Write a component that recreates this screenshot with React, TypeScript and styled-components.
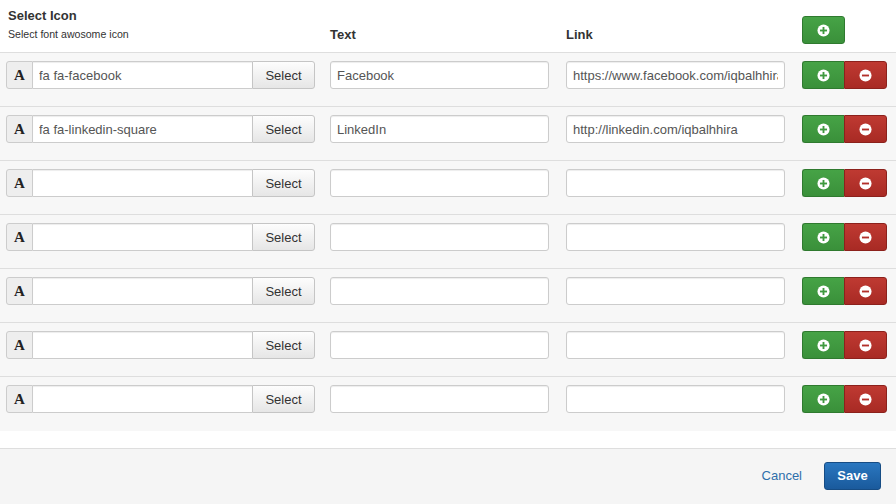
import * as React from 'react'
import styled, { createGlobalStyle } from 'styled-components'

const GlobalStyle = createGlobalStyle`
  html, body {
    margin: 0;
    padding: 0;
    background: #fff;
    font-family: "Liberation Sans", Arial, sans-serif;
    color: #333;
  }
  * { box-sizing: border-box; }
`

type Row = { icon: string; text: string; link: string }

const rows: Row[] = [
  { icon: 'fa fa-facebook', text: 'Facebook', link: 'https://www.facebook.com/iqbalhhira' },
  { icon: 'fa fa-linkedin-square', text: 'LinkedIn', link: 'http://linkedin.com/iqbalhhira' },
  { icon: '', text: '', link: '' },
  { icon: '', text: '', link: '' },
  { icon: '', text: '', link: '' },
  { icon: '', text: '', link: '' },
  { icon: '', text: '', link: '' },
]

const CircleIcon = ({ minus, color }: { minus?: boolean; color: string }) => (
  <svg width="13" height="13" viewBox="0 0 14 14">
    <circle cx="7" cy="7" r="6.5" fill="#fff" />
    <rect x="3.2" y="6" width="7.6" height="2" fill={color} />
    {!minus && <rect x="6" y="3.2" width="2" height="7.6" fill={color} />}
  </svg>
)

export default function App() {
  return (
    <Page>
      <GlobalStyle />
      <Header>
        <HeadCell>
          <Title>Select Icon</Title>
          <Hint>Select font awosome icon</Hint>
        </HeadCell>
        <ColLabel>Text</ColLabel>
        <ColLabel>Link</ColLabel>
        <HeadActions>
          <GreenButton $single>
            <CircleIcon color="#3f9a3f" />
          </GreenButton>
        </HeadActions>
      </Header>
      <Body>
        {rows.map((r, i) => (
          <RowLine key={i} $last={i === rows.length - 1}>
            <InputGroup>
              <Addon>A</Addon>
              <GroupInput defaultValue={r.icon} />
              <SelectButton>Select</SelectButton>
            </InputGroup>
            <Field defaultValue={r.text} />
            <Field defaultValue={r.link} />
            <ButtonGroup>
              <GreenButton>
                <CircleIcon color="#3f9a3f" />
              </GreenButton>
              <RedButton>
                <CircleIcon minus color="#b3302a" />
              </RedButton>
            </ButtonGroup>
          </RowLine>
        ))}
      </Body>
      <Spacer />
      <Footer>
        <CancelLink href="#">Cancel</CancelLink>
        <SaveButton>Save</SaveButton>
      </Footer>
    </Page>
  )
}

const Page = styled.div`
  width: 896px;
  height: 504px;
  display: flex;
  flex-direction: column;
  overflow: hidden;
`

const columns = `309px 219px 219px 85px`

const Header = styled.div`
  display: grid;
  grid-template-columns: ${columns};
  column-gap: 15px;
  padding: 8px 0 0 6px;
  height: 53px;
  border-bottom: 1px solid #dedede;
  & > :nth-child(3) {
    margin-left: 2px;
  }
  & > :nth-child(4) {
    margin-left: 4px;
  }
`

const HeadCell = styled.div`
  padding-left: 2px;
`

const Title = styled.div`
  font-size: 13px;
  font-weight: bold;
  color: #333;
  line-height: 16px;
`

const Hint = styled.div`
  font-size: 10.6px;
  color: #333;
  margin-top: 4px;
`

const ColLabel = styled.div`
  font-size: 13px;
  font-weight: bold;
  color: #333;
  padding-top: 19px;
`

const HeadActions = styled.div`
  padding-top: 8px;
`

const Body = styled.div`
  background: #f7f7f7;
`

const RowLine = styled.div<{ $last?: boolean }>`
  display: grid;
  grid-template-columns: ${columns};
  column-gap: 15px;
  align-items: start;
  height: 54px;
  padding: 8px 0 0 6px;
  border-bottom: ${(p) => (p.$last ? 'none' : '1px solid #dedede')};
  & > :nth-child(3) {
    margin-left: 2px;
  }
  & > :nth-child(4) {
    margin-left: 4px;
  }
`

const InputGroup = styled.div`
  display: flex;
  height: 28px;
`

const Addon = styled.span`
  width: 27px;
  display: flex;
  align-items: center;
  justify-content: center;
  background: #eee;
  border: 1px solid #ccc;
  border-radius: 3px 0 0 3px;
  font-family: "Liberation Serif", "Times New Roman", serif;
  font-weight: bold;
  font-size: 15px;
  color: #222;
`

const inputStyle = `
  height: 28px;
  border: 1px solid #ccc;
  background: #fff;
  box-shadow: inset 0 1px 1px rgba(0, 0, 0, 0.075);
  font-family: "Liberation Sans", Arial, sans-serif;
  font-size: 13px;
  color: #555;
  padding: 0 6px;
  outline: none;
`

const GroupInput = styled.input`
  ${inputStyle}
  flex: 1;
  min-width: 0;
  border-left: none;
  border-right: none;
  border-radius: 0;
`

const SelectButton = styled.button`
  width: 63px;
  border: 1px solid #c5c5c5;
  border-radius: 0 3px 3px 0;
  background: linear-gradient(#fdfdfd, #e6e6e6);
  font-family: "Liberation Sans", Arial, sans-serif;
  font-size: 13px;
  color: #333;
  padding: 0;
`

const Field = styled.input`
  ${inputStyle}
  width: 219px;
  border-radius: 3px;
`

const ButtonGroup = styled.div`
  display: flex;
  height: 28px;
`

const BaseButton = styled.button`
  display: flex;
  align-items: center;
  justify-content: center;
  height: 28px;
  padding: 0;
  cursor: pointer;
  flex-shrink: 0;
`

const GreenButton = styled(BaseButton)<{ $single?: boolean }>`
  width: ${(p) => (p.$single ? '43px' : '42px')};
  background: linear-gradient(#46a346, #3a903a);
  border: 1px solid #2f7a2f;
  border-radius: ${(p) => (p.$single ? '3px' : '3px 0 0 3px')};
  border-right-width: ${(p) => (p.$single ? '1px' : '0')};
`

const RedButton = styled(BaseButton)`
  width: 43px;
  background: linear-gradient(#bf3a32, #a82a24);
  border: 1px solid #8c211c;
  border-radius: 0 3px 3px 0;
`

const Spacer = styled.div`
  height: 18px;
  border-bottom: 1px solid #dedede;
`

const Footer = styled.div`
  flex: 1;
  background: #f5f5f5;
  display: flex;
  align-items: center;
  justify-content: flex-end;
  padding: 0 15px 2px 0;
  gap: 22px;
`

const CancelLink = styled.a`
  font-size: 13px;
  color: #2f6fab;
  text-decoration: none;
`

const SaveButton = styled.button`
  width: 57px;
  height: 28px;
  background: linear-gradient(#2a77c0, #1a5a9c);
  border: 1px solid #164c84;
  border-radius: 3px;
  color: #fff;
  font-family: "Liberation Sans", Arial, sans-serif;
  font-weight: bold;
  font-size: 13px;
  padding: 0;
`
